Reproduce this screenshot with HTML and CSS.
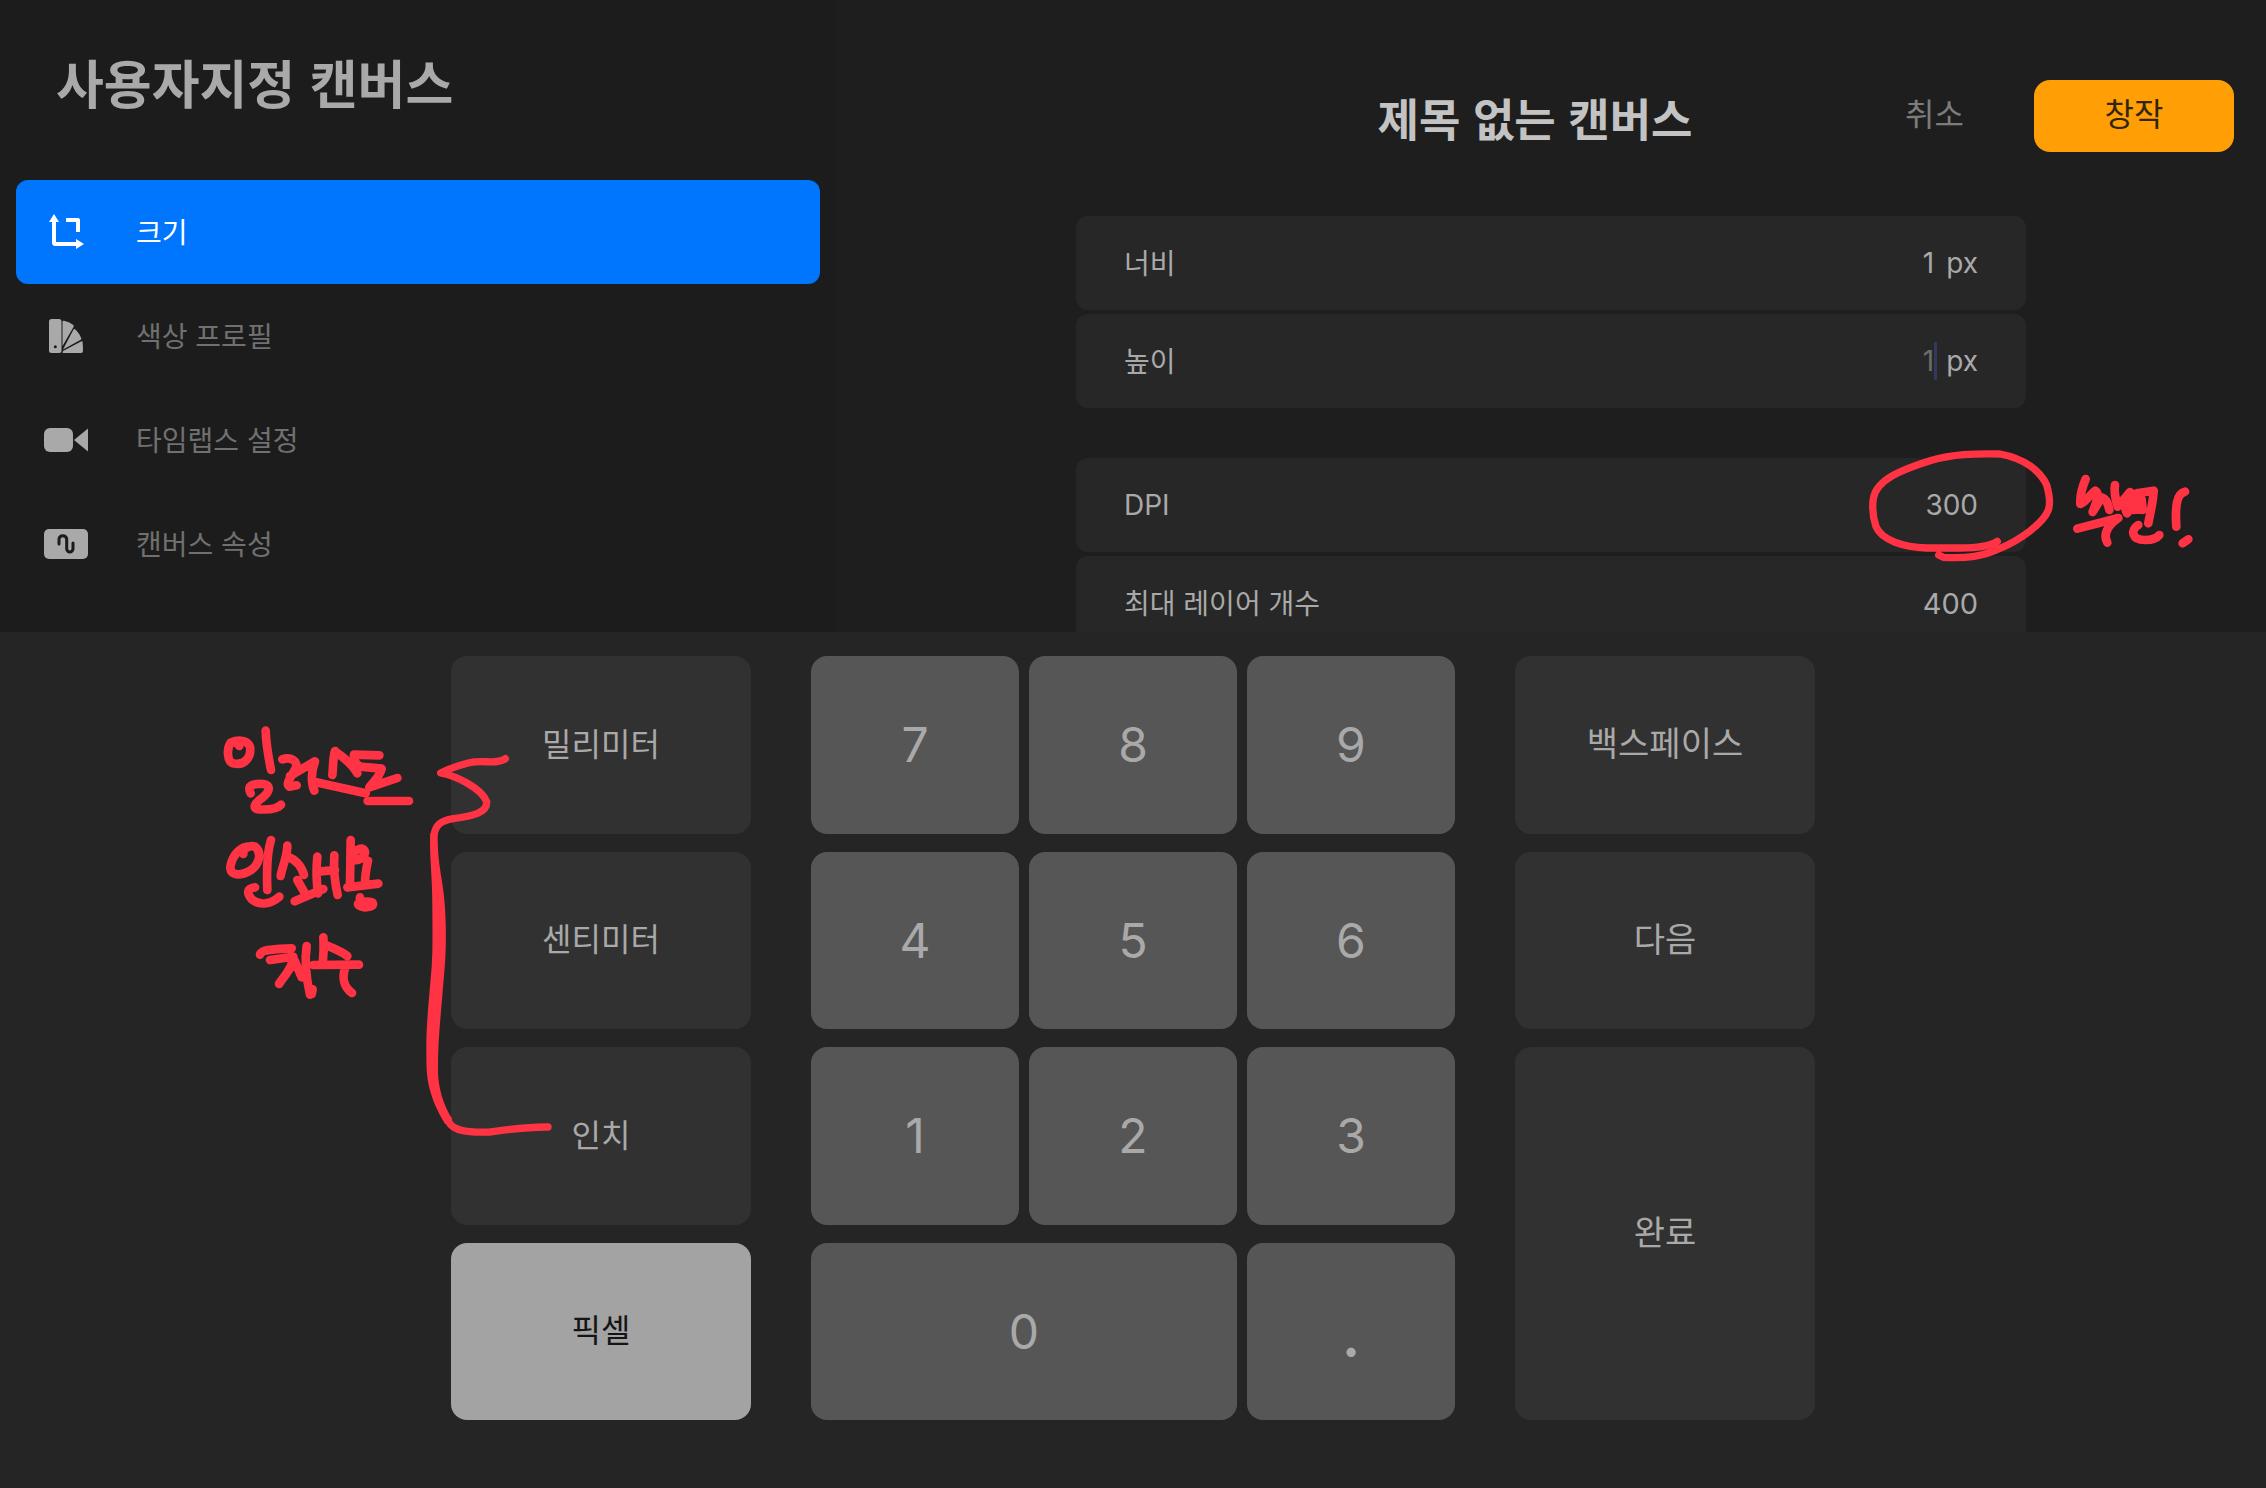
FILE: index.html
```html
<!DOCTYPE html>
<html lang="ko">
<head>
<meta charset="utf-8">
<meta name="viewport" content="width=device-width, initial-scale=1">
<title>사용자지정 캔버스</title>
<link rel="stylesheet" href="styles.css">
</head>
<body>
<div class="screen">
  <div class="settings">
    <aside class="sidebar">
      <h1 class="sidebar-title">사용자지정 캔버스</h1>
      <nav class="menu">
        <button class="menu-item is-active" type="button">
          <svg class="menu-icon" viewBox="0 0 44 36" aria-hidden="true">
            <path d="M10 6V28.500Q10 30 11.500 30H33" fill="none" stroke="currentColor" stroke-width="4"/>
            <path d="M10 0L15 8H5ZM40 30L32 35V25Z" fill="currentColor"/>
            <path d="M22 6H34V18" fill="none" stroke="currentColor" stroke-width="4" stroke-linejoin="round"/>
          </svg>
          <span>크기</span>
        </button>
        <button class="menu-item" type="button">
          <svg class="menu-icon" viewBox="0 0 44 36" aria-hidden="true">
            <rect x="5" y="1" width="12.500" height="34" rx="2.500" fill="currentColor"/>
            <circle class="icon-cut" cx="11.300" cy="28.700" r="1.500"/>
            <path fill="currentColor" d="M18.500 4Q18.500 2.500 20 2.700Q25 3.500 29.300 7Q30.200 8 29.500 9L18.500 28ZM19 31.500L29.500 11.500Q30.300 10.300 31.500 11.500Q35.500 15.500 37.300 20.300Q37.500 21.300 36.300 21.900ZM19 33L37 23.400Q38.500 22.800 38.600 24Q39 28 39 33Q39 35 37 35H18.500Z"/>
          </svg>
          <span>색상 프로필</span>
        </button>
        <button class="menu-item" type="button">
          <svg class="menu-icon" viewBox="0 0 44 36" aria-hidden="true">
            <rect x="0" y="6" width="29" height="24" rx="6" fill="currentColor"/>
            <path d="M30 18L44 6.500V29.500Z" fill="currentColor"/>
          </svg>
          <span>타임랩스 설정</span>
        </button>
        <button class="menu-item" type="button">
          <svg class="menu-icon" viewBox="0 0 44 36" aria-hidden="true">
            <rect x="0" y="3" width="44" height="30" rx="5" fill="currentColor"/>
            <path class="icon-line" d="M15 18V13A3.900 4 0 0 1 22.700 13V23A3.200 3.500 0 0 0 29 23V17"/>
          </svg>
          <span>캔버스 속성</span>
        </button>
      </nav>
    </aside>

    <main class="panel">
      <header class="panel-header">
        <h2 class="panel-title">제목 없는 캔버스</h2>
        <div class="panel-actions">
          <button class="cancel" type="button">취소</button>
          <button class="create" type="button">창작</button>
        </div>
      </header>
      <form class="fields">
        <div class="field-group">
          <div class="field">
            <label for="width">너비</label>
            <span class="value"><input id="width" type="text" value="1" size="6"><span class="unit">px</span></span>
          </div>
          <div class="field">
            <label for="height">높이</label>
            <span class="value is-editing"><input id="height" type="text" value="1" size="6"><span class="caret"></span><span class="unit">px</span></span>
          </div>
        </div>
        <div class="field-group">
          <div class="field">
            <label class="latin" for="dpi">DPI</label>
            <span class="value"><input id="dpi" type="text" value="300" size="6"></span>
            <svg class="ink ink-dpi" viewBox="120 30 1050 390" aria-hidden="true">
              <path class="ink-medium" d="M532 334Q500 354 420 354L320 354C250 352 185 330 168 290C155 250 157 225 160 205C170 150 240 120 330 92C400 72 460 71 540 72C610 85 660 120 680 165C690 200 692 220 685 240C670 280 600 330 540 355C490 380 440 385 370 382L356 375"/>
              <path d="M797 147C785 175 780 205 781 222C800 215 812 190 826 182C840 190 830 215 818 246L845 202C862 208 865 225 868 240"/>
              <path d="M885 165C882 185 887 210 893 230L930 186C915 210 912 235 921 250C935 232 950 218 965 208L968 240M925 215L950 190L1001 182C1000 215 990 250 985 280M930 240L968 238"/>
              <path d="M772 296L895 264C865 285 848 310 862 338M955 285C930 300 935 330 975 330C1000 330 1010 325 1018 315"/>
              <path d="M1095 185C1070 190 1065 230 1069 290M1088 340L1105 328"/>
            </svg>
          </div>
          <div class="field">
            <span>최대 레이어 개수</span>
            <output class="value value-layers">400</output>
          </div>
        </div>
      </form>
    </main>
  </div>

  <section class="keypad" aria-label="키패드">
    <div class="units">
      <button class="key key-text" type="button">밀리미터</button>
      <button class="key key-text" type="button">센티미터</button>
      <button class="key key-text" type="button">인치</button>
      <button class="key key-text is-selected" type="button" aria-pressed="true">픽셀</button>
      <svg class="ink ink-note" viewBox="60 60 600 870" aria-hidden="true">
        <path d="M118 138C112 130 105 122 92 128C80 145 80 185 100 190C135 198 155 170 150 140C140 117 110 120 92 128M197 92C198 130 205 170 213 210M152 280C140 255 160 250 190 252C215 255 210 275 185 295C165 310 155 325 175 328C210 330 235 325 243 314"/>
        <path d="M247 178C270 170 300 182 285 208C275 230 255 250 268 260L290 256M270 228L345 184C333 215 333 250 343 272M405 153C398 175 400 200 397 225M410 158C430 172 455 190 472 220M345 246L497 280"/>
        <path d="M538 166L462 164C460 175 465 190 480 200L545 206C540 230 520 245 508 262L592 234M503 303L627 303"/>
        <path d="M130 462C125 445 150 435 165 440C190 460 175 500 145 515C115 530 85 525 92 495C98 470 115 445 140 440M213 420C200 460 200 520 202 570M165 562C140 565 140 580 155 598C180 620 215 610 238 590"/>
        <path d="M262 437C262 470 245 505 242 528M262 470C290 480 305 500 312 525M292 540L315 580M284 604L370 567M352 470C348 510 350 550 354 580M355 515L405 510M403 466C400 510 405 550 413 585"/>
        <path d="M452 420L450 555M455 475C465 440 495 440 495 458C490 478 470 485 455 478M504 482C500 500 495 530 495 550M442 562L535 551M480 592V605M474 612Q495 600 518 608Q525 620 495 622Q475 620 474 612"/>
        <path d="M180 764C185 748 220 748 275 745M210 780L280 770C280 800 255 825 237 852M283 780L305 832M320 738C312 790 320 840 330 884M335 882L338 868M340 795L477 794M370 712C372 740 370 770 368 790M376 735C400 745 425 755 442 768M437 800C425 830 430 860 456 879"/>
      </svg>
      <svg class="ink ink-bracket" viewBox="60 330 420 1170" aria-hidden="true">
        <path class="ink-medium" d="M316 356C290 375 250 358 205 369C170 378 150 385 122 399C170 408 245 445 260 485C262 520 215 527 160 536C120 543 107 555 102 585"/>
        <path class="ink-solid" d="M91 580C87 640 97 700 97 800C97 860 99 920 95 980C87 1080 79 1150 79 1220C79 1270 79 1300 86 1335C95 1375 112 1415 136 1453L157 1437C130 1395 112 1340 114 1280C114 1200 122 1130 130 1030C140 930 139 860 134 790C130 720 112 680 113 580Z"/>
        <path class="ink-medium" d="M146 1445C160 1476 215 1478 270 1476C330 1468 380 1460 444 1461"/>
      </svg>
    </div>
    <div class="digits">
      <button class="key key-digit" type="button">7</button>
      <button class="key key-digit" type="button">8</button>
      <button class="key key-digit" type="button">9</button>
      <button class="key key-digit" type="button">4</button>
      <button class="key key-digit" type="button">5</button>
      <button class="key key-digit" type="button">6</button>
      <button class="key key-digit" type="button">1</button>
      <button class="key key-digit" type="button">2</button>
      <button class="key key-digit" type="button">3</button>
      <button class="key key-digit key-zero" type="button">0</button>
      <button class="key key-digit key-point" type="button">.</button>
    </div>
    <div class="commands">
      <button class="key key-text key-command" type="button">백스페이스</button>
      <button class="key key-text key-command" type="button">다음</button>
      <button class="key key-text key-command key-done" type="button">완료</button>
    </div>
  </section>
</div>
</body>
</html>
```
FILE: styles.css
```css
* {
  box-sizing: border-box;
}

body {
  margin: 0;
  background: #252525;
  color: #a9a9a9;
  font-family: "Noto Sans CJK KR", Inter, sans-serif;
  font-size: 28px;
}

button,
input {
  margin: 0;
  padding: 0;
  border: 0;
  background: none;
  color: inherit;
  font: inherit;
}

.screen {
  display: flex;
  flex-direction: column;
  height: 100vh;
}

.settings {
  display: grid;
  grid-template-columns: 836fr 1430fr;
  flex: 1;
  min-height: 0;
  overflow: hidden;
}

/* Sidebar */

.sidebar {
  padding: 44px 16px 0;
  background: #1c1c1c;
}

.sidebar-title {
  margin: 0 0 60px;
  padding-left: 40px;
  font-size: 52px;
  font-weight: 700;
  line-height: 76px;
}

.menu {
  display: flex;
  flex-direction: column;
}

.menu-item {
  display: flex;
  align-items: center;
  gap: 48px;
  height: 104px;
  padding-left: 28px;
  border-radius: 12px;
  text-align: left;
}

.menu-item span {
  padding-bottom: 2px;
  color: #707070;
}

.menu-icon {
  width: 44px;
  height: 36px;
}

.icon-cut {
  fill: #1c1c1c;
}

.icon-line {
  fill: none;
  stroke: #1c1c1c;
  stroke-width: 3;
  stroke-linecap: round;
}

.menu-item.is-active,
.menu-item.is-active span {
  color: #fff;
}

.menu-item.is-active {
  background: #0076ff;
}

/* Canvas form */

.panel {
  background: #1e1e1e;
}

.panel-header {
  display: grid;
  grid-template-columns: 1fr auto 1fr;
  align-items: center;
  padding: 80px 32px 64px 0;
}

.panel-title {
  grid-column: 2;
  margin: 0;
  padding-top: 4px;
  color: #c3c3c3;
  font-size: 45px;
  font-weight: 700;
  line-height: 68px;
}

.panel-actions {
  display: flex;
  justify-content: flex-end;
  gap: 70px;
  font-size: 32px;
}

.cancel,
.create {
  height: 72px;
  padding-bottom: 8px;
}

.cancel {
  color: #7c7c7c;
}

.create {
  width: 200px;
  border-radius: 16px;
  background: #ff9f05;
  color: #33240c;
}

.fields {
  display: flex;
  flex-direction: column;
  gap: 50px;
  width: 950px;
  margin: 0 auto;
}

.field-group {
  display: flex;
  flex-direction: column;
  gap: 4px;
}

.field {
  position: relative;
  display: flex;
  align-items: center;
  justify-content: space-between;
  height: 94px;
  padding: 0 48px;
  border-radius: 12px;
  background: #272727;
}

.field > label:not(.latin),
.field > span:first-child {
  padding-bottom: 2px;
}

.latin,
.value {
  font-family: Inter, sans-serif;
}

.value {
  position: relative;
  display: flex;
  align-items: center;
  gap: 12px;
}

.value input {
  text-align: right;
}

.value-layers {
  font-size: 29px;
}

.is-editing input {
  color: #6c6c6c;
}

.caret {
  position: absolute;
  right: 41px;
  width: 3px;
  height: 38px;
  background: #313a5e;
}

/* Keypad */

.keypad {
  display: grid;
  grid-template-columns: 300px 644px 300px;
  justify-content: center;
  gap: 60px;
  height: 856px;
  padding: 24px 0 68px;
  background: #252525;
}

.units,
.digits,
.commands {
  display: grid;
  grid-template-rows: repeat(4, 1fr);
  gap: 18px;
}

.units {
  position: relative;
}

.digits {
  grid-template-columns: repeat(3, 1fr);
  column-gap: 10px;
}

.key {
  border-radius: 16px;
  background: #313131;
}

.key-text {
  padding-bottom: 6px;
  font-size: 32px;
}

.key-command {
  font-size: 34px;
}

.key-done {
  grid-row: span 2;
}

.key-digit {
  background: #565656;
  font-family: Inter, sans-serif;
  font-size: 48px;
}

.key-zero {
  grid-column: span 2;
}

.key-point {
  font-size: 70px;
}

.key.is-selected {
  background: #a3a3a3;
  color: #151515;
}

/* Handwritten notes lying over the controls */

.ink {
  position: absolute;
  z-index: 1;
  fill: none;
  stroke: #ff3343;
  stroke-width: 26;
  stroke-linecap: round;
  stroke-linejoin: round;
  pointer-events: none;
}

.ink-medium {
  stroke-width: 22;
}

.ink-solid {
  fill: #ff3343;
  stroke: none;
}

.ink-dpi {
  top: -18px;
  right: -184px;
  width: 350px;
  height: 130px;
}

.ink-note {
  top: 64px;
  left: -231px;
  width: 200px;
  height: 290px;
}

.ink-bracket {
  top: 94px;
  left: -31px;
  width: 140px;
  height: 390px;
}
```
